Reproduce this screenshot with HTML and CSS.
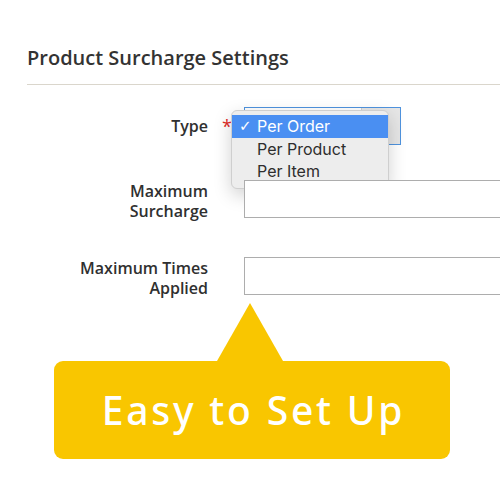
FILE: index.html
```html
<!DOCTYPE html>
<html lang="en">
<head>
    <meta charset="UTF-8">
    <meta name="viewport" content="width=device-width, initial-scale=1.0">
    <title>Product Surcharge Settings</title>
    <link rel="stylesheet" href="styles.css">
</head>
<body>
    <div class="page">
        <h2 class="section-title">Product Surcharge Settings</h2>

        <div class="form">
            <div class="field field-select">
                <label class="field-label">Type</label>
                <span class="required">*</span>
                <div class="control">
                    <div class="select-box">
                        <span class="select-value"></span>
                        <span class="select-arrow"></span>
                    </div>
                    <ul class="select-menu">
                        <li class="option selected"><span class="check">✓</span>Per Order</li>
                        <li class="option">Per Product</li>
                        <li class="option">Per Item</li>
                    </ul>
                </div>
            </div>

            <div class="field">
                <label class="field-label">Maximum<br>Surcharge</label>
                <span class="required"></span>
                <div class="control">
                    <input class="text-input" type="text">
                </div>
            </div>

            <div class="field">
                <label class="field-label">Maximum Times<br>Applied</label>
                <span class="required"></span>
                <div class="control">
                    <input class="text-input" type="text">
                </div>
            </div>
        </div>

        <div class="callout">
            <div class="callout-tip"></div>
            <div class="callout-box">Easy to Set Up</div>
        </div>
    </div>
</body>
</html>
```

FILE: styles.css
```css
:root {
    --text-dark: #303030;
    --divider: #dad6cc;
    --input-border: #adadad;
    --focus-border: #4f93de;
    --menu-bg: #ededed;
    --menu-highlight: #4a8ff2;
    --required: #e02b27;
    --callout: #f9c600;
}

* {
    margin: 0;
    padding: 0;
    box-sizing: border-box;
}

body {
    background-color: #fff;
    font-family: 'Open Sans', 'Noto Sans', sans-serif;
    color: var(--text-dark);
}

.page {
    width: 500px;
    height: 500px;
    overflow: hidden;
    padding-left: 27px;
}

.section-title {
    margin-top: 45px;
    padding-bottom: 13px;
    border-bottom: 1px solid var(--divider);
    font-size: 20px;
    line-height: 26px;
    font-weight: 600;
    color: #333;
}

.form {
    display: flex;
    flex-direction: column;
    gap: 35px;
    margin-top: 22px;
}

.field {
    display: grid;
    grid-template-columns: 181px 36px 300px;
    align-items: start;
}

.field-label {
    padding: 1px 0 1px;
    text-align: right;
    font-size: 16px;
    line-height: 20px;
    font-weight: 600;
    color: var(--text-dark);
}

.field-select {
    align-items: center;
}

.field-select .field-label {
    padding: 0;
}

.required {
    padding-left: 14px;
    font-size: 18px;
    line-height: 20px;
    color: var(--required);
}

.control {
    position: relative;
}

.select-box {
    display: flex;
    width: 157px;
    height: 38px;
    border: 1px solid var(--focus-border);
    background-color: #fff;
}

.select-value {
    flex: 1;
}

.select-arrow {
    width: 39px;
    border-left: 1px solid #d0d0d0;
    background-color: #e6e6e6;
}

.select-menu {
    position: absolute;
    top: 3px;
    left: -13px;
    width: 158px;
    padding: 4px 0 5px;
    list-style: none;
    background-color: var(--menu-bg);
    border: 1px solid #cfcfcf;
    border-radius: 6px;
    box-shadow: 0 6px 18px rgba(0, 0, 0, 0.18);
    font-family: Inter, 'Liberation Sans', sans-serif;
    font-size: 16px;
}

.option {
    position: relative;
    height: 22.5px;
    line-height: 22.5px;
    padding-left: 25px;
    color: #2e2e2e;
}

.option.selected {
    background-color: var(--menu-highlight);
    color: #fff;
}

.check {
    position: absolute;
    left: 7px;
    font-family: 'DejaVu Sans', sans-serif;
    font-size: 15px;
}

.text-input {
    display: block;
    width: 300px;
    height: 38px;
    border: 1px solid var(--input-border);
    background-color: #fff;
    outline: none;
}

.callout {
    display: flex;
    flex-direction: column;
    margin-top: 4px;
    margin-left: 27px;
    width: 396px;
}

.callout-tip {
    width: 66px;
    height: 58px;
    margin-left: 163px;
    background-color: var(--callout);
    clip-path: polygon(50% 0, 100% 100%, 0 100%);
}

.callout-box {
    display: flex;
    justify-content: center;
    align-items: center;
    height: 98px;
    padding: 0 0 2px 3px;
    border-radius: 9px;
    background-color: var(--callout);
    color: #fff;
    font-family: 'Noto Sans', sans-serif;
    font-size: 39px;
    font-weight: 500;
    letter-spacing: 2.8px;
}
```
